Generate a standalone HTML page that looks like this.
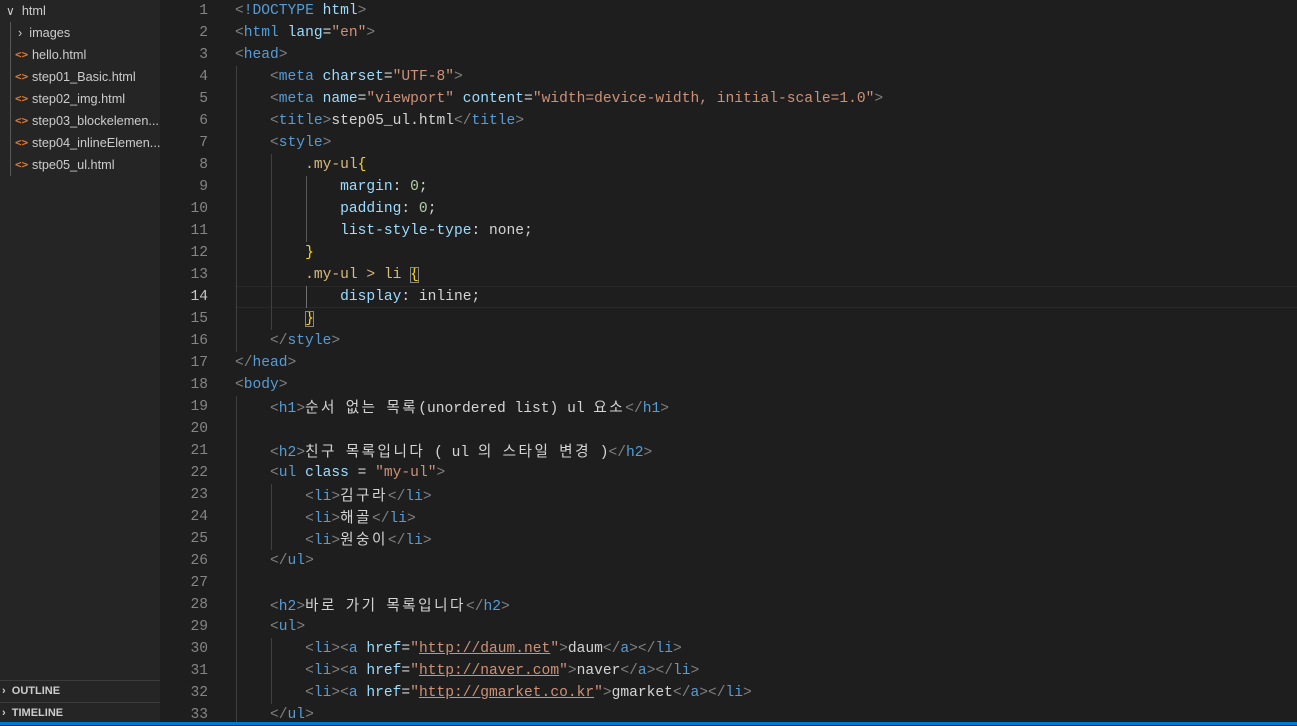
<!DOCTYPE html>
<html><head><meta charset="utf-8"><style>
body{margin:0;width:1297px;height:725px;background:#1e1e1e;overflow:hidden;position:relative;font-family:"Liberation Sans",sans-serif}
#side{position:absolute;left:0;top:0;width:160px;height:725px;background:#252526;overflow:hidden}
.it{position:absolute;left:0;height:22px;line-height:22px;font-size:12.7px;color:#cccccc;white-space:nowrap}
.ic{position:absolute;left:15px;top:0;color:#e37933;font-size:11px;font-weight:bold;font-family:"DejaVu Sans Mono",monospace}
.sec{position:absolute;left:0;width:160px;height:21px;border-top:1px solid #3c3c3c;font-size:11px;font-weight:bold;color:#cccccc;line-height:21px}
#ed{position:absolute;left:160px;top:0;width:1137px;height:722px}
.ln{position:absolute;left:0;width:48px;text-align:right;font-family:"Liberation Mono",monospace;font-size:14.6px;color:#858585;height:22px;line-height:22px}
.cl{position:absolute;left:75px;font-family:"Liberation Mono","Noto Sans CJK KR",monospace;font-size:14.6px;color:#d4d4d4;height:22px;line-height:22px;white-space:pre}
.t{color:#569cd6}.b{color:#808080}.a{color:#9cdcfe}.s{color:#ce9178}.sel{color:#d7ba7d}.n{color:#b5cea8}.y{color:#ffd700}
.u{color:#ce9178;text-decoration:underline}
.k{font-family:"Noto Sans CJK KR",sans-serif;letter-spacing:2.5px}
.g{position:absolute;width:1px;background:#404040}
#bar{position:absolute;left:0;bottom:0;width:1297px;height:3px;background:#007acc}
</style></head><body>
<div id="side">
<div class="it" style="top:0;left:6px"><span style="color:#ccc;font-size:12px">&#8744;</span>&nbsp; html</div>
<div style="position:absolute;left:10px;top:22px;width:1px;height:154px;background:#585858"></div>
<div class="it" style="top:22px;left:18px">›&nbsp; images</div>
<div class="it" style="top:44px;width:160px"><span class="ic">&lt;&gt;</span><span style="position:absolute;left:32px">hello.html</span></div>
<div class="it" style="top:66px;width:160px"><span class="ic">&lt;&gt;</span><span style="position:absolute;left:32px">step01_Basic.html</span></div>
<div class="it" style="top:88px;width:160px"><span class="ic">&lt;&gt;</span><span style="position:absolute;left:32px">step02_img.html</span></div>
<div class="it" style="top:110px;width:160px"><span class="ic">&lt;&gt;</span><span style="position:absolute;left:32px">step03_blockelemen...</span></div>
<div class="it" style="top:132px;width:160px"><span class="ic">&lt;&gt;</span><span style="position:absolute;left:32px">step04_inlineElemen...</span></div>
<div class="it" style="top:154px;width:160px"><span class="ic">&lt;&gt;</span><span style="position:absolute;left:32px">stpe05_ul.html</span></div>
<div class="sec" style="top:680px"><span style="padding-left:2px">›</span>&nbsp; OUTLINE</div>
<div class="sec" style="top:702px"><span style="padding-left:2px">›</span>&nbsp; TIMELINE</div>
</div>
<div id="ed">
<div style="position:absolute;left:75px;top:286px;width:1062px;height:20px;border-top:1px solid #282828;border-bottom:1px solid #282828"></div>
<div class="g" style="left:76px;top:66px;height:286px"></div>
<div class="g" style="left:111px;top:154px;height:176px"></div>
<div class="g" style="left:146px;top:176px;height:66px;background:#585858"></div>
<div class="g" style="left:146px;top:286px;height:22px;background:#707070"></div>
<div class="g" style="left:76px;top:396px;height:326px"></div>
<div class="g" style="left:111px;top:484px;height:66px"></div>
<div class="g" style="left:111px;top:638px;height:66px"></div>

<div class="ln" style="top:0">1</div><div class="cl" style="top:0"><span class="b">&lt;</span><span class="t">!DOCTYPE</span> <span class="a">html</span><span class="b">&gt;</span></div>
<div class="ln" style="top:22px">2</div><div class="cl" style="top:22px"><span class="b">&lt;</span><span class="t">html</span> <span class="a">lang</span>=<span class="s">"en"</span><span class="b">&gt;</span></div>
<div class="ln" style="top:44px">3</div><div class="cl" style="top:44px"><span class="b">&lt;</span><span class="t">head</span><span class="b">&gt;</span></div>
<div class="ln" style="top:66px">4</div><div class="cl" style="top:66px">    <span class="b">&lt;</span><span class="t">meta</span> <span class="a">charset</span>=<span class="s">"UTF-8"</span><span class="b">&gt;</span></div>
<div class="ln" style="top:88px">5</div><div class="cl" style="top:88px">    <span class="b">&lt;</span><span class="t">meta</span> <span class="a">name</span>=<span class="s">"viewport"</span> <span class="a">content</span>=<span class="s">"width=device-width, initial-scale=1.0"</span><span class="b">&gt;</span></div>
<div class="ln" style="top:110px">6</div><div class="cl" style="top:110px">    <span class="b">&lt;</span><span class="t">title</span><span class="b">&gt;</span>step05_ul.html<span class="b">&lt;/</span><span class="t">title</span><span class="b">&gt;</span></div>
<div class="ln" style="top:132px">7</div><div class="cl" style="top:132px">    <span class="b">&lt;</span><span class="t">style</span><span class="b">&gt;</span></div>
<div class="ln" style="top:154px">8</div><div class="cl" style="top:154px">        <span class="sel">.my-ul</span><span class="y">{</span></div>
<div class="ln" style="top:176px">9</div><div class="cl" style="top:176px">            <span class="a">margin</span>: <span class="n">0</span>;</div>
<div class="ln" style="top:198px">10</div><div class="cl" style="top:198px">            <span class="a">padding</span>: <span class="n">0</span>;</div>
<div class="ln" style="top:220px">11</div><div class="cl" style="top:220px">            <span class="a">list-style-type</span>: none;</div>
<div class="ln" style="top:242px">12</div><div class="cl" style="top:242px">        <span class="y">}</span></div>
<div class="ln" style="top:264px">13</div><div class="cl" style="top:264px">        <span class="sel">.my-ul &gt; li</span> <span class="y" style="outline:1px solid #888;outline-offset:-1px">{</span></div>
<div class="ln" style="top:286px;color:#c6c6c6">14</div><div class="cl" style="top:286px">            <span class="a">display</span>: inline;</div>
<div class="ln" style="top:308px">15</div><div class="cl" style="top:308px">        <span class="y" style="outline:1px solid #888;outline-offset:-1px">}</span></div>
<div class="ln" style="top:330px">16</div><div class="cl" style="top:330px">    <span class="b">&lt;/</span><span class="t">style</span><span class="b">&gt;</span></div>
<div class="ln" style="top:352px">17</div><div class="cl" style="top:352px"><span class="b">&lt;/</span><span class="t">head</span><span class="b">&gt;</span></div>
<div class="ln" style="top:374px">18</div><div class="cl" style="top:374px"><span class="b">&lt;</span><span class="t">body</span><span class="b">&gt;</span></div>
<div class="ln" style="top:396px">19</div><div class="cl" style="top:396px">    <span class="b">&lt;</span><span class="t">h1</span><span class="b">&gt;</span><span class="k">순서</span> <span class="k">없는</span> <span class="k">목록</span>(unordered list) ul <span class="k">요소</span><span class="b">&lt;/</span><span class="t">h1</span><span class="b">&gt;</span></div>
<div class="ln" style="top:418px">20</div>
<div class="ln" style="top:440px">21</div><div class="cl" style="top:440px">    <span class="b">&lt;</span><span class="t">h2</span><span class="b">&gt;</span><span class="k">친구</span> <span class="k">목록입니다</span> ( ul <span class="k">의</span> <span class="k">스타일</span> <span class="k">변경</span> )<span class="b">&lt;/</span><span class="t">h2</span><span class="b">&gt;</span></div>
<div class="ln" style="top:462px">22</div><div class="cl" style="top:462px">    <span class="b">&lt;</span><span class="t">ul</span> <span class="a">class</span> = <span class="s">"my-ul"</span><span class="b">&gt;</span></div>
<div class="ln" style="top:484px">23</div><div class="cl" style="top:484px">        <span class="b">&lt;</span><span class="t">li</span><span class="b">&gt;</span><span class="k">김구라</span><span class="b">&lt;/</span><span class="t">li</span><span class="b">&gt;</span></div>
<div class="ln" style="top:506px">24</div><div class="cl" style="top:506px">        <span class="b">&lt;</span><span class="t">li</span><span class="b">&gt;</span><span class="k">해골</span><span class="b">&lt;/</span><span class="t">li</span><span class="b">&gt;</span></div>
<div class="ln" style="top:528px">25</div><div class="cl" style="top:528px">        <span class="b">&lt;</span><span class="t">li</span><span class="b">&gt;</span><span class="k">원숭이</span><span class="b">&lt;/</span><span class="t">li</span><span class="b">&gt;</span></div>
<div class="ln" style="top:550px">26</div><div class="cl" style="top:550px">    <span class="b">&lt;/</span><span class="t">ul</span><span class="b">&gt;</span></div>
<div class="ln" style="top:572px">27</div>
<div class="ln" style="top:594px">28</div><div class="cl" style="top:594px">    <span class="b">&lt;</span><span class="t">h2</span><span class="b">&gt;</span><span class="k">바로</span> <span class="k">가기</span> <span class="k">목록입니다</span><span class="b">&lt;/</span><span class="t">h2</span><span class="b">&gt;</span></div>
<div class="ln" style="top:616px">29</div><div class="cl" style="top:616px">    <span class="b">&lt;</span><span class="t">ul</span><span class="b">&gt;</span></div>
<div class="ln" style="top:638px">30</div><div class="cl" style="top:638px">        <span class="b">&lt;</span><span class="t">li</span><span class="b">&gt;&lt;</span><span class="t">a</span> <span class="a">href</span>=<span class="s">"</span><span class="u">http://daum.net</span><span class="s">"</span><span class="b">&gt;</span>daum<span class="b">&lt;/</span><span class="t">a</span><span class="b">&gt;&lt;/</span><span class="t">li</span><span class="b">&gt;</span></div>
<div class="ln" style="top:660px">31</div><div class="cl" style="top:660px">        <span class="b">&lt;</span><span class="t">li</span><span class="b">&gt;&lt;</span><span class="t">a</span> <span class="a">href</span>=<span class="s">"</span><span class="u">http://naver.com</span><span class="s">"</span><span class="b">&gt;</span>naver<span class="b">&lt;/</span><span class="t">a</span><span class="b">&gt;&lt;/</span><span class="t">li</span><span class="b">&gt;</span></div>
<div class="ln" style="top:682px">32</div><div class="cl" style="top:682px">        <span class="b">&lt;</span><span class="t">li</span><span class="b">&gt;&lt;</span><span class="t">a</span> <span class="a">href</span>=<span class="s">"</span><span class="u">http://gmarket.co.kr</span><span class="s">"</span><span class="b">&gt;</span>gmarket<span class="b">&lt;/</span><span class="t">a</span><span class="b">&gt;&lt;/</span><span class="t">li</span><span class="b">&gt;</span></div>
<div class="ln" style="top:704px">33</div><div class="cl" style="top:704px">    <span class="b">&lt;/</span><span class="t">ul</span><span class="b">&gt;</span></div>
</div>
<div id="bar"></div>
</body></html>
